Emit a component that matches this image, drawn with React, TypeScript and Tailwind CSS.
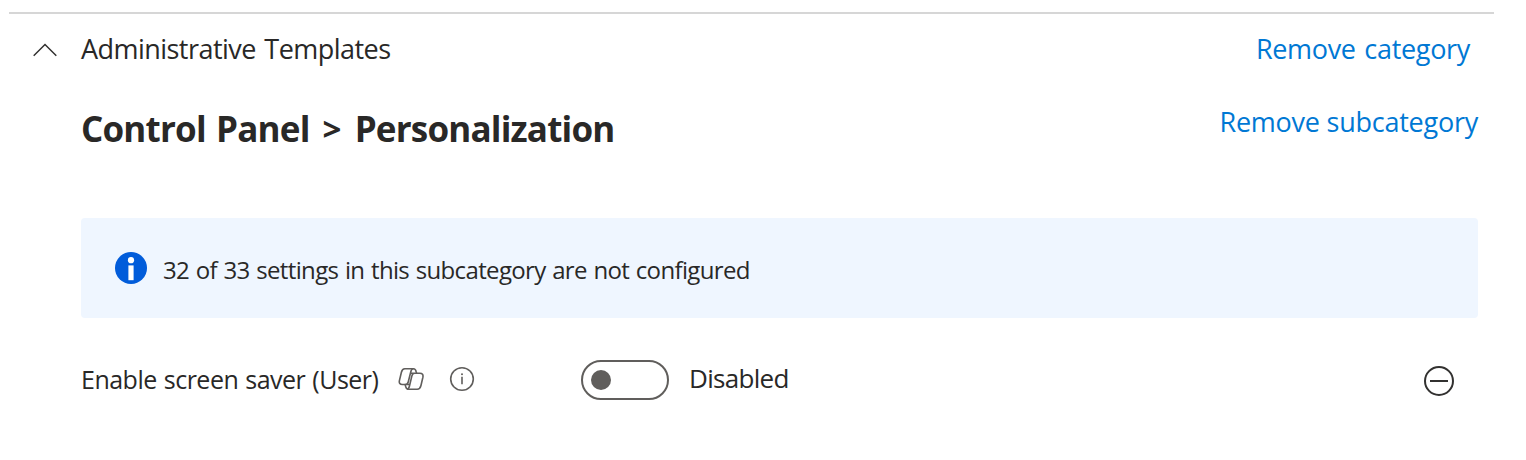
import React from "react";

function ChevronUp() {
  return (
    <svg className="h-4 w-6 shrink-0" viewBox="0 0 24 16" fill="none" stroke="#323130" strokeWidth="1.5" aria-hidden="true">
      <path d="M0.7 13.8 12 2.5l11.3 11.3" />
    </svg>
  );
}

function InfoFilled() {
  return (
    <svg className="size-8 shrink-0" viewBox="0 0 32 32" aria-hidden="true">
      <circle cx="16" cy="16" r="16" fill="#015cda" />
      <circle cx="16" cy="8.2" r="3.1" fill="#fff" />
      <rect x="13.4" y="13.4" width="5.2" height="14.8" fill="#fff" />
    </svg>
  );
}

function CopilotIcon() {
  return (
    <svg className="h-6 w-[26px]" viewBox="0 0 26 24" fill="none" stroke="#605e5c" strokeWidth="1.6" strokeLinejoin="round" aria-hidden="true">
      <path d="M6.8 1.8h8.7c1.5 0 2.3 1.2 2.7 2.9l.4 1.5h3.3c2.4 0 3.5 1.6 3 4l-2 8.5c-.6 2.400-1.700 3.500-3.700 3.500h-8.700c-1.700 0-2.400-1-2.800-2.600l-.6-2.100H4.300c-2.300 0-3.400-1.600-2.900-3.900l2-8.300c.5-2 1.500-3.500 3.400-3.500Z" />
      <path d="M15.5 1.8c-1.500 0-2.300 1.200-2.700 2.900l-2.500 10c-.5 1.900-1.500 2.800-3.200 2.800h4.300M18.600 6.200h-2c-1.600 0-2.300 1-2.700 2.700l-2.500 10.300c-.4 1.800-1 2.800-2.500 3M12.500 6.200h4.100" />
    </svg>
  );
}

function InfoOutline() {
  return (
    <svg className="size-[26px]" viewBox="0 0 26 26" fill="none" stroke="#605e5c" strokeWidth="1.6" aria-hidden="true">
      <circle cx="13" cy="13" r="11.3" />
      <path d="M13 10.7v7.600" />
      <circle cx="13" cy="8.2" r="1" fill="#605e5c" stroke="none" />
    </svg>
  );
}

function RemoveIcon() {
  return (
    <svg className="size-[30px]" viewBox="0 0 30 30" fill="none" stroke="#323130" strokeWidth="2" aria-hidden="true">
      <circle cx="15" cy="15" r="14" />
      <path d="M6 15h18" />
    </svg>
  );
}

export default function App() {
  return (
    <main className="h-[460px] w-[1526px] overflow-hidden bg-white pt-3 pl-[9px] font-['Open_Sans','Noto_Sans',sans-serif] text-[#292827]">
      <hr className="w-[1485px] border-0 border-t-2 border-[#d6d6d6]" />

      <header className="flex h-[72px] w-[1461px] items-center">
        <button type="button" aria-label="Collapse" className="ml-6 flex w-12 items-center">
          <ChevronUp />
        </button>
        <h2 className="grow pb-px text-[27px] tracking-[-0.54px] [word-spacing:2px]">Administrative Templates</h2>
        <button type="button" className="pb-px text-[27px] tracking-[-0.32px] text-[#0078d4] [word-spacing:2px]">Remove category</button>
      </header>

      <section className="ml-[72px] w-[1397px]">
        <div className="flex h-[132px] items-start justify-between">
          <h3 className="mt-[18px] flex text-[35px] leading-[49px] font-bold tracking-[-0.8px]">
            <span className="[word-spacing:2px]">Control Panel</span>
            <span className="mr-[14px] ml-[13px] text-[33px]">&gt;</span>
            <span>Personalization</span>
          </h3>
          <button type="button" className="mt-[17px] text-[27px] leading-[37px] tracking-[-0.24px] text-[#0078d4]">Remove subcategory</button>
        </div>

        <div className="flex h-[100px] items-center gap-4 rounded bg-[#eff6ff] pl-[34px]">
          <InfoFilled />
          <p className="pt-[3px] text-[24px] tracking-[-0.65px] [word-spacing:1px]">32 of 33 settings in this subcategory are not configured</p>
        </div>

        <div className="flex h-[124px] items-center">
          <div className="flex w-[500px] items-center">
            <span className="w-[317px] text-[25px] tracking-[-0.5px] [word-spacing:1px]">Enable screen saver (User)</span>
            <button type="button" aria-label="Copilot" className="mr-[25px] pb-0.5"><CopilotIcon /></button>
            <button type="button" aria-label="More information" className="pb-0.5"><InfoOutline /></button>
          </div>
          <button type="button" role="switch" aria-checked="false" className="flex h-10 w-[88px] items-center rounded-full border-2 border-[#605e5c] pl-2">
            <span className="size-5 rounded-full bg-[#605e5c]" />
          </button>
          <span className="ml-5 grow pb-[3px] text-[26px] tracking-[-0.7px]">Disabled</span>
          <button type="button" aria-label="Remove setting" className="mr-6 pt-0.5"><RemoveIcon /></button>
        </div>
      </section>
    </main>
  );
}
